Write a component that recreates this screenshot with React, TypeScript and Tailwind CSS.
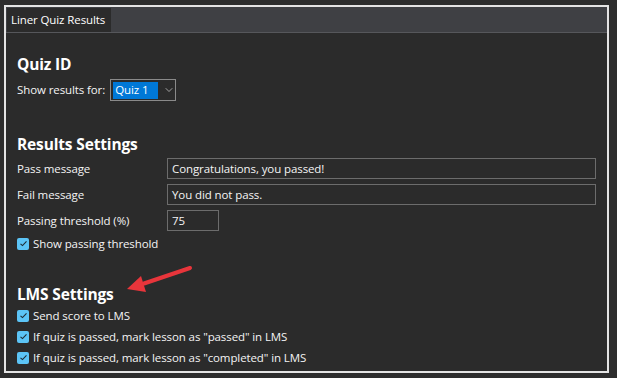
import { ChevronDown } from 'lucide-react';

type CheckProps = {
  label: string;
};

const Check = ({ label }: CheckProps) => {
  return (
    <div className="flex items-center h-[21px] gap-[4px]">
      <span className="w-[12px] h-[12px] rounded-[2px] bg-[#5cc4f6] flex items-center justify-center">
        <svg width="9" height="9" viewBox="0 0 9 9">
          <path d="M1.5 4.8 L3.5 6.6 L7.5 2.4" fill="none" stroke="#1e2a33" strokeWidth="1.1" />
        </svg>
      </span>
      <span>{label}</span>
    </div>
  );
};

type FieldProps = {
  label: string;
  value: string;
  width: string;
};

const Field = ({ label, value, width }: FieldProps) => {
  return (
    <div className="flex items-center h-[21px]">
      <span className="w-[150px] shrink-0">{label}</span>
      <div className={`${width} h-[21px] border border-[#6c6c6c] flex items-center pl-[4px]`}>{value}</div>
    </div>
  );
};

export default function App() {
  return (
    <div className="relative w-[617px] h-[378px] bg-[#2d2d2d] pl-[4px] pt-[5px] text-[11.5px] tracking-[-0.1px] text-[#f4f4f4] font-['Open_Sans','Noto_Sans',sans-serif]">
      <div className="w-[605px] h-[368px] border-2 border-[#e4e4e4] bg-[#2b2b2b] flex flex-col">
        <div className="h-[26px] bg-[#3f4044] border-b border-[#56575b] flex items-end pl-px">
          <div className="h-[24px] bg-[#2b2b2b] pl-[4px] pr-[6px] flex items-center text-white">Liner Quiz Results</div>
        </div>

        <div className="flex flex-col pl-[11px]">
          <h2 className="mt-[20px] h-[22px] leading-[22px] text-[15.5px] tracking-[-0.15px] font-bold text-white">Quiz ID</h2>
          <div className="mt-[4px] flex items-center h-[22px] gap-[5px]">
            <span>Show results for:</span>
            <div className="w-[66px] h-[22px] border border-[#8a8a8a] flex items-center pl-[2px] gap-[2px]">
              <span className="w-[45px] h-[17px] bg-[#0078d7] text-white flex items-center pl-[2px]">Quiz 1</span>
              <ChevronDown size={12} strokeWidth={1.5} className="text-[#c8c8c8] ml-[3px]" />
            </div>
          </div>

          <h2 className="mt-[32px] h-[22px] leading-[22px] text-[15.5px] tracking-[-0.15px] font-bold text-white">Results Settings</h2>
          <div className="mt-[3px] flex flex-col gap-[5px]">
            <Field label="Pass message" value="Congratulations, you passed!" width="w-[429px]" />
            <Field label="Fail message" value="You did not pass." width="w-[429px]" />
            <Field label="Passing threshold (%)" value="75" width="w-[52px]" />
          </div>
          <div className="mt-[2px]">
            <Check label="Show passing threshold" />
          </div>

          <h2 className="mt-[29px] h-[22px] leading-[22px] text-[15.5px] tracking-[-0.15px] font-bold text-white">LMS Settings</h2>
          <Check label="Send score to LMS" />
          <Check label={'If quiz is passed, mark lesson as "passed" in LMS'} />
          <Check label={'If quiz is passed, mark lesson as "completed" in LMS'} />
        </div>
      </div>

      {/* red annotation arrow */}
      <svg className="absolute left-0 top-0 pointer-events-none" width="617" height="378">
        <line x1="190" y1="268" x2="144" y2="283.5" stroke="#e8353b" strokeWidth="4" strokeLinecap="round" />
        <polygon points="127,289 146,292 141,276" fill="#e8353b" />
      </svg>
    </div>
  );
}
